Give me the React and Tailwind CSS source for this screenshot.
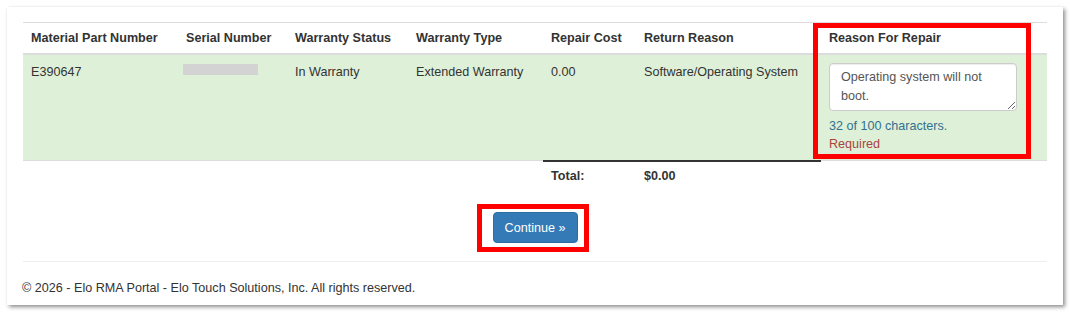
import React from 'react';

const cols = 'grid grid-cols-[155px_109px_121px_135px_93px_185px_228px]';

function App() {
  return (
    <div className="w-[1070px] h-[312px] bg-white pt-[7px] pl-[7px] font-['Liberation_Sans',Arial,sans-serif]">
      <div className="relative w-[1056px] h-[298px] bg-white shadow-[2px_2px_4px_rgba(0,0,0,0.45)] pt-[15px] px-[16px] text-[12.6px] leading-[18px] text-[#333]">
        {/* table */}
        <div className="relative">
          <div className={`${cols} h-[33px] border-t border-b-2 border-[#ddd] font-bold items-center`}>
            <div className="px-2">Material Part Number</div>
            <div className="px-2">Serial Number</div>
            <div className="px-2">Warranty Status</div>
            <div className="px-2">Warranty Type</div>
            <div className="px-2">Repair Cost</div>
            <div className="px-2">Return Reason</div>
            <div className="px-2">Reason For Repair</div>
          </div>
          <div className={`${cols} h-[106px] bg-[#dff0d8] border-b border-[#ddd]`}>
            <div className="px-2 pt-[8px]">E390647</div>
            <div className="px-[5px] pt-[9px]">
              <div className="w-[75px] h-[11px] bg-[#d3d3d3]"></div>
            </div>
            <div className="px-2 pt-[8px]">In Warranty</div>
            <div className="px-2 pt-[8px]">Extended Warranty</div>
            <div className="px-2 pt-[8px]">0.00</div>
            <div className="px-2 pt-[8px]">Software/Operating System</div>
            <div className="px-2 pt-[8px]">
              <textarea
                className="block w-[188px] h-[48px] bg-white border border-[#ccc] rounded-[4px] shadow-[inset_0_1px_1px_rgba(0,0,0,0.075)] pl-[11px] pr-2 pt-[4px] text-[12.6px] leading-[19px] text-[#555] resize-y outline-none"
                defaultValue="Operating system will not boot."
              />
              <div className="mt-[6px] text-[#31708f]">32 of 100 characters.</div>
              <div className="text-[#a94442]">Required</div>
            </div>
          </div>
          <div className={`${cols} h-[32px] items-center font-bold`}>
            <div></div>
            <div></div>
            <div></div>
            <div></div>
            <div className="px-2 h-full flex items-center border-t-2 border-[#333] -mt-[2px] pb-[2px]">Total:</div>
            <div className="px-2 h-full flex items-center border-t-2 border-[#333] -mt-[2px] pb-[2px]">$0.00</div>
            <div></div>
          </div>
          {/* annotation over the Reason For Repair column */}
          <div className="absolute left-[790px] top-[1px] w-[218px] h-[136px] border-[5px] border-[#ff0000] pointer-events-none"></div>
        </div>

        <div className="flex justify-center mt-[19px]">
          <div className="relative">
            <button className="w-[85px] h-[31px] bg-[#337ab7] border border-[#2e6da4] rounded-[4px] text-white text-[12.6px]">
              Continue »
            </button>
            <div className="absolute -left-[16px] -top-[8px] w-[112px] h-[48px] border-[5px] border-[#ff0000] pointer-events-none"></div>
          </div>
        </div>

        <hr className="mt-[18px] border-t border-[#eee]" />
        <div className="mt-[17px] -ml-[1px]">© 2026 - Elo RMA Portal - Elo Touch Solutions, Inc. All rights reserved.</div>
      </div>
    </div>
  );
}

export default App;
